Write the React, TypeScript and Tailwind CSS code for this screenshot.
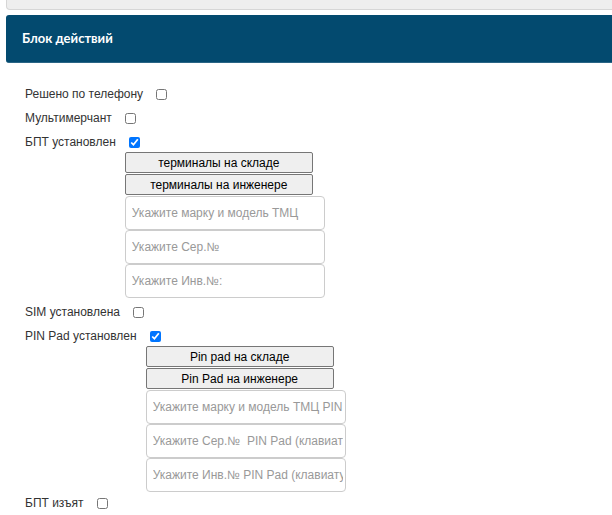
import React from 'react';

type Group = {
  buttons: string[];
  inputs: string[];
};

type Row = {
  label: string;
  checked?: boolean;
  group?: Group;
  mt: string;
};

const rows: Row[] = [
  { label: 'Решено по телефону', mt: 'mt-0' },
  { label: 'Мультимерчант', mt: 'mt-[4px]' },
  {
    label: 'БПТ установлен',
    checked: true,
    mt: 'mt-[4px]',
    group: {
      buttons: ['терминалы на складе', 'терминалы на инженере'],
      inputs: ['Укажите марку и модель ТМЦ', 'Укажите Сер.№', 'Укажите Инв.№:'],
    },
  },
  { label: 'SIM установлена', mt: 'mt-[4px]' },
  {
    label: 'PIN Pad установлен',
    checked: true,
    mt: 'mt-[4px]',
    group: {
      buttons: ['Pin pad на складе', 'Pin Pad на инженере'],
      inputs: [
        'Укажите марку и модель ТМЦ PIN Pad (клавиатуры)',
        'Укажите Сер.№  PIN Pad (клавиатуры)',
        'Укажите Инв.№ PIN Pad (клавиатуры)',
      ],
    },
  },
  { label: 'БПТ изъят', mt: 'mt-[1px]' },
];

const FormRow: React.FC<{ row: Row }> = ({ row }) => (
  <div className={`flex items-start ${row.mt}`}>
    <label className="leading-[20px] text-[12px] text-[#333] pr-[9px] whitespace-nowrap">{row.label}</label>
    <div className="flex flex-col items-start">
      <input
        type="checkbox"
        defaultChecked={row.checked}
        className="ml-[4px] mt-[5px] mb-[4px] w-[11px] h-[11px]"
      />
      {row.group && (
        <>
          {row.group.buttons.map(b => (
            <button
              key={b}
              className="w-[188px] h-[21px] mb-[1px] bg-[#efefef] border border-[#767676] rounded-[2px] text-[12px] text-black leading-none"
            >
              {b}
            </button>
          ))}
          {row.group.inputs.map(p => (
            <input
              key={p}
              type="text"
              placeholder={p}
              className="w-[200px] h-[34px] pl-[6px] pr-[2px] border border-[#cccccc] rounded-[4px] text-[12px] placeholder:text-[#999] bg-white"
            />
          ))}
        </>
      )}
    </div>
  </div>
);

export default function App() {
  return (
    <div
      className="w-[612px] h-[515px] overflow-hidden bg-white"
      style={{ fontFamily: '"Liberation Sans", Arial, sans-serif' }}
    >
      <div className="ml-[6px] w-[640px] h-[10px] bg-[#eeeeee] border border-t-0 border-[#d6d6d6] rounded-b-[4px]" />
      <div className="ml-[6px] mt-[5px] w-[640px] h-[48px] bg-[#034a6f] rounded-[3px] border-b border-[#2a6585] flex items-center pl-[16px]">
        <span className="text-white text-[13px] font-bold" style={{ fontFamily: 'Lato, "Liberation Sans", sans-serif' }}>
          Блок действий
        </span>
      </div>
      <div className="pl-[25px] pt-[21px] flex flex-col">
        {rows.map(r => (
          <FormRow key={r.label} row={r} />
        ))}
      </div>
    </div>
  );
}
